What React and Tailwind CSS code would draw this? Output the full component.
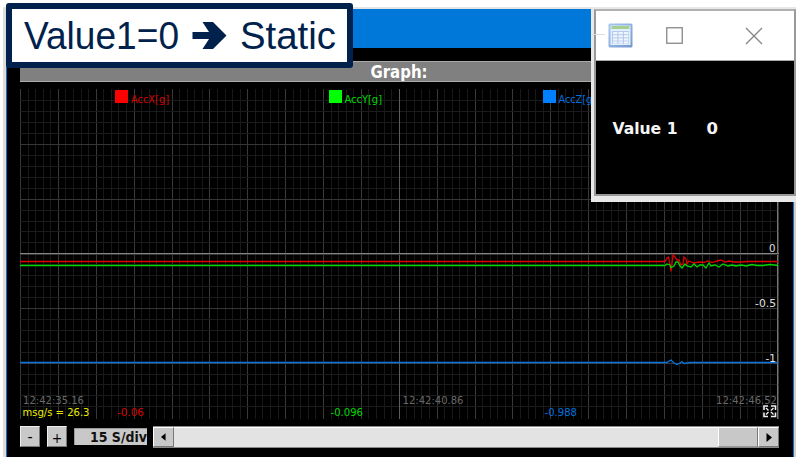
const range = (n) => Array.from({ length: n }, (_, i) => i);
const tahoma = "[font-family:'DejaVu_Sans_Condensed','DejaVu_Sans',sans-serif] [font-stretch:condensed]";

function Label({ x, y, w, fill, size = 11, children }) {
  return (
    <text x={x} y={y} fill={fill} fontSize={size} textLength={w} lengthAdjust="spacingAndGlyphs">
      {children}
    </text>
  );
}

function Chart() {
  return (
    <svg width="759" height="330" viewBox="20 89 759 330" className={`block shrink-0 ${tahoma}`}>
      <g>
        {range(101).map((i) => (
          <rect key={i} x={Math.round(20 + i * 7.575)} y="89" width="1" height="330" fill={i % 5 ? '#191919' : '#393939'} />
        ))}
        {range(29).map((i) => (
          <rect key={i} x="20" y={Math.round(100.3 + i * 10.93)} width="759" height="1" fill={i % 5 === 4 ? '#373737' : '#1b1b1b'} />
        ))}
        <rect x="399" y="89" width="1" height="330" fill="#5d5d5d" />
        <rect x="777" y="89" width="1" height="330" fill="#777" />
        <rect x="20" y="253" width="759" height="1" fill="#858585" />
        <rect x="20" y="254" width="759" height="1" fill="#343434" />
      </g>
      <rect x="115" y="90" width="13" height="13" fill="#f00" />
      <Label x={131} y={102.5} w={38} fill="#d80000">AccX[g]</Label>
      <rect x="329" y="90" width="13" height="13" fill="#0f0" />
      <Label x={344.5} y={102.5} w={37.5} fill="#00d800">AccY[g]</Label>
      <rect x="543" y="90" width="13" height="13" fill="#0080ff" />
      <Label x={558.5} y={102.5} w={37.5} fill="#0070df">AccZ[g]</Label>

      <g fill="none" strokeWidth="1.3">
        <path stroke="#e00000" d="M20 261.5H665L667 258L668.5 257L670 265L671 271.5L673 255L675 257L677 260L679 260L681 265L683 264L684 257L686 259L687 264L689 261L694 263L699 262L704 262.5L708 261L712 262.5L717 261L721 260L725 262L729 261L734 262H741L746 261.5H778" />
        <path stroke="#00d600" d="M20 265.5H665L667 264L670 265L671 267.5L674 266L676 262L678 262L680 266L682 268L685 264L687 266L691 267L694 264L697 267L700 265L703 265L706 268L709 263L711 266L715 265L719 267L723 264L728 266L732 265L736 266L741 265L746 266L752 264.5L757 265.5L763 265.5L770 264.5L778 265.5" />
        <path stroke="#0874dc" d="M20 362.5H667L671 360L674 363L677 364.5L680 363L682 361.5L684 363.5L690 362.5H778" />
      </g>

      <Label x={769} y={252} w={6.5} fill="#e0e0e0">0</Label>
      <Label x={755} y={307} w={21} fill="#e0e0e0">-0.5</Label>
      <Label x={765.5} y={362} w={10.5} fill="#e0e0e0">-1</Label>

      <Label x={23} y={404} w={61} fill="#686868">12:42:35.16</Label>
      <Label x={402.5} y={404} w={61} fill="#686868">12:42:40.86</Label>
      <Label x={716} y={404} w={61} fill="#686868">12:42:46.52</Label>
      <Label x={22.5} y={416} w={67} fill="#ecec00">msg/s = 26.3</Label>
      <Label x={117} y={416} w={27} fill="#d60000">-0.06</Label>
      <Label x={330.5} y={416} w={32.5} fill="#00d600">-0.096</Label>
      <Label x={544.5} y={416} w={32.5} fill="#0070df">-0.988</Label>

      <g fill="none" stroke="#eee" strokeWidth="1.6">
        <path d="M764 410V406H768M771 406H775.5V410M775.5 412.5V416.5H771M768 416.5H764V412.5" />
        <path strokeWidth="1.4" d="M766 408L768.5 410.5M773.5 408L771 410.5M766 414.5L768.5 412M773.5 414.5L771 412" />
      </g>
    </svg>
  );
}

function StepButton({ children }) {
  return (
    <button className="flex h-[21px] w-[20px] shrink-0 items-center justify-center border border-t-[#eee] border-l-[#eee] border-r-[#777] border-b-[#777] bg-[#c8c8c8] text-black">
      {children}
    </button>
  );
}

function Toolbar() {
  return (
    <div className={`mt-[7px] flex h-[23px] w-[759px] items-start ${tahoma}`}>
      <StepButton><span className="text-[16px] leading-none">-</span></StepButton>
      <div className="ml-[7px] flex"><StepButton><span className="pt-[2px] text-[14px] leading-none">+</span></StepButton></div>
      <div className="mt-[2px] ml-[7px] h-[17px] w-[73px] shrink-0 overflow-hidden border-t border-l border-[#999] bg-[#c8c8c8]">
        <svg width="73" height="16" className="block">
          <text x="15" y="12.5" fontSize="13.5" fontWeight="bold" fill="#111" textLength="57" lengthAdjust="spacingAndGlyphs">15 S/div</text>
        </svg>
      </div>
      <div className="ml-[6px] flex h-[22px] flex-1 border-y border-y-[#888] bg-[#e3e3e3]">
        <div className="flex w-[21px] items-center justify-center border border-t-white border-l-white border-r-[#777] border-b-[#777] bg-[#c8c8c8]">
          <svg width="5" height="8" viewBox="0 0 6 9"><path d="M5.5 0V9L0 4.5Z" /></svg>
        </div>
        <div className="flex-1 border-t border-white" />
        <div className="w-[40px] border border-t-white border-l-white border-r-[#777] border-b-[#999] bg-[#c8c8c8]" />
        <div className="flex w-[21px] items-center justify-center border border-t-white border-l-white border-r-[#777] border-b-[#777] bg-[#c8c8c8]">
          <svg width="6" height="9" viewBox="0 0 6 9"><path d="M.5 0V9L6 4.5Z" /></svg>
        </div>
      </div>
    </div>
  );
}

function TableIcon() {
  return (
    <svg width="25" height="25" viewBox="0 0 25 25" className="block">
      <defs>
        <linearGradient id="frame" x1="0" y1="0" x2="1" y2="1">
          <stop stopColor="#a9c8f2" />
          <stop offset="1" stopColor="#7398cf" />
        </linearGradient>
      </defs>
      <rect x=".5" y=".5" width="24" height="24" rx="1.5" fill="url(#frame)" />
      <rect x="2.5" y="2.5" width="20" height="19.5" fill="#e3effc" />
      <rect x="3.5" y="3" width="18" height="3" fill="#a5d08e" />
      <rect x="4" y="8" width="17" height="13" fill="#b3caec" />
      {[9, 12.2, 15.4, 18.4].map((y) =>
        [5, 10.5, 16].map((x) => <rect key={`${x}-${y}`} x={x} y={y} width="4.4" height="2.2" fill="#eef6ff" />)
      )}
    </svg>
  );
}

function ValueWindow() {
  return (
    <div className="absolute top-[7px] left-[591px] h-[195px] w-[205px] bg-[#e8e8e8] pt-[2px] pl-[3px]">
      <div className="h-[187px] w-[202px] border-2 border-[#999] border-t-[#b0b0b0] bg-black">
        <div className="flex h-[50px] items-center border-b border-[#aaa] bg-white pl-[12px]">
          <TableIcon />
          <svg width="17" height="17" className="ml-[33px]"><rect x=".75" y=".75" width="15.5" height="15.5" fill="none" stroke="#888" strokeWidth="1.3" /></svg>
          <svg width="18" height="18" className="ml-[62px]"><path d="M1 1L17 17M17 1L1 17" stroke="#888" strokeWidth="1.4" /></svg>
        </div>
        <svg width="198" height="133" viewBox="596 61 198 133" className={`block ${tahoma}`}>
          <g fill="#f5f5f5" fontSize="16.5" fontWeight="bold">
            <text x="612.5" y="134" textLength="65" lengthAdjust="spacingAndGlyphs">Value 1</text>
            <text x="706.5" y="134" textLength="11.5" lengthAdjust="spacingAndGlyphs">0</text>
          </g>
        </svg>
      </div>
      <div className="absolute top-[27px] left-0 h-px w-[14px] bg-[#ddd]" />
    </div>
  );
}

function Callout() {
  return (
    <div className="absolute top-[3px] left-[6px] h-[65px] w-[347px] rounded-[3px] border-6 border-[#00214b] bg-white">
      <svg width="335" height="53" viewBox="12 9 335 53" className="block [font-family:'Liberation_Sans',Arial,sans-serif]">
        <g fill="#00214b" fontSize="38">
          <text x="24" y="49" textLength="155" lengthAdjust="spacingAndGlyphs">Value1=0</text>
          <path d="M192.5 32H209L202.5 22H213L226.5 35.5L213 49H202.5L209 39H192.5Z" />
          <text x="240" y="49" textLength="96" lengthAdjust="spacingAndGlyphs">Static</text>
        </g>
      </svg>
    </div>
  );
}

export default function App() {
  return (
    <div className="relative h-[457px] w-[796px] overflow-hidden bg-white pt-[7px] pl-[3px]">
      <div className="h-[450px] w-[793px] border-t-2 border-r-2 border-l-3 border-t-[#e3e3e3] border-r-[#cfcfcf] border-l-[#ddd]">
        <main className="h-[448px] border-x border-[#0873ca] bg-black">
          <div className="h-[39px] bg-[#0078d9]" />
          <div className="pt-[13px] pl-[13px]">
            <div className="h-[21px] w-[759px] border-y border-[#aaa] bg-[#808080]">
              <svg width="759" height="19" viewBox="20 62 759 19" className={`block ${tahoma}`}>
                <text x="370.5" y="77.5" fontSize="17" fontWeight="bold" fill="white" textLength="57" lengthAdjust="spacingAndGlyphs">Graph:</text>
              </svg>
            </div>
            <div className="pt-[7px]"><Chart /></div>
            <Toolbar />
          </div>
        </main>
      </div>
      <Callout />
      <ValueWindow />
    </div>
  );
}
